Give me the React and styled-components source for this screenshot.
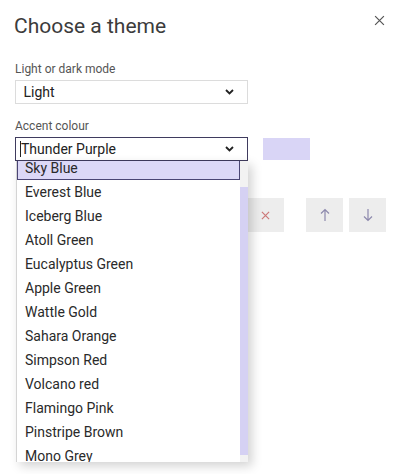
import React, { useLayoutEffect, useRef } from 'react';
import styled, { createGlobalStyle } from 'styled-components';

const GlobalStyle = createGlobalStyle`
  html, body {
    margin: 0;
    background: #fff;
    font-family: Roboto, "Liberation Sans", sans-serif;
  }
`;

const Dialog = styled.div`
  position: relative;
  width: 401px;
  height: 474px;
  box-sizing: border-box;
  padding: 11px 15px 0 15px;
  overflow: hidden;
`;

const Header = styled.div`
  display: flex;
  justify-content: space-between;
  align-items: flex-start;
`;

const Title = styled.h2`
  margin: 0 0 0 -1px;
  font-size: 21px;
  line-height: 30px;
  font-weight: 400;
  color: #3c3c3c;
`;

const CloseButton = styled.button`
  border: 0;
  background: none;
  padding: 0;
  margin: 4px 1px 0 0;
  width: 11px;
  height: 11px;
  display: flex;
  color: #555;
`;

const Field = styled.div`
  margin-top: ${p => p.$top}px;
`;

const Label = styled.div`
  font-size: 12px;
  line-height: 16px;
  color: #555;
  margin-bottom: 3px;
`;

const FieldRow = styled.div`
  display: flex;
  align-items: center;
  gap: 15px;
`;

const SelectWrap = styled.div`
  position: relative;
  width: 233px;
`;

const SelectBox = styled.div`
  height: 24px;
  box-sizing: border-box;
  border: 1px solid ${p => (p.$open ? '#3f3b5e' : '#dcdcdc')};
  display: flex;
  align-items: center;
  padding: 0 13px 0 4px;
  font-size: 14px;
  color: #222;
`;

const SelectText = styled.span`
  flex: 1;
  display: flex;
  align-items: center;
`;

const Caret = styled.span`
  width: 1px;
  height: 16px;
  background: #222;
`;

const Swatch = styled.div`
  width: 47px;
  height: 22px;
  background: #d9d5f6;
`;

const Dropdown = styled.div`
  position: absolute;
  top: 100%;
  left: 1px;
  width: 232px;
  height: 301px;
  display: flex;
  background: #fff;
  border-left: 1px solid #d4d4d4;
  box-sizing: border-box;
  box-shadow: 4px 4px 10px rgba(0, 0, 0, 0.18);
  z-index: 2;
`;

const Options = styled.ul`
  flex: 1;
  margin: 0;
  padding: 0;
  list-style: none;
  overflow: hidden;
`;

const Option = styled.li`
  height: 24px;
  line-height: 22px;
  box-sizing: border-box;
  padding: 0 7px;
  font-size: 14px;
  color: #2a2a2a;
  white-space: nowrap;
  border: 1px solid ${p => (p.$active ? '#4a4574' : 'transparent')};
  background: ${p => (p.$active ? '#dcd8f7' : 'transparent')};
`;

const ScrollTrack = styled.div`
  width: 8px;
  background: #f2f2f2;
  display: flex;
  flex-direction: column;
`;

const ScrollThumb = styled.div`
  margin-top: 26px;
  height: 268px;
  background: #d5d1f3;
`;

const ButtonRow = styled.div`
  margin-top: 37px;
  display: flex;
  justify-content: flex-end;
  align-items: center;
`;

const IconButton = styled.button`
  width: 37px;
  height: 34px;
  border: 0;
  padding: 0;
  background: #ededed;
  display: flex;
  align-items: center;
  justify-content: center;
  color: ${p => p.$color};
  margin-left: ${p => p.$gap}px;
`;

const Chevron = () => (
  <svg width="9" height="6" viewBox="0 0 9 6">
    <path d="M1 1l3.5 3.5L8 1" fill="none" stroke="#222" strokeWidth="1.8" />
  </svg>
);

const Cross = ({ size, width }) => (
  <svg width={size} height={size} viewBox="0 0 10 10">
    <path d="M1 1l8 8M9 1l-8 8" fill="none" stroke="currentColor" strokeWidth={width} />
  </svg>
);

const Arrow = ({ down }) => (
  <svg width="10" height="14" viewBox="0 0 10 14" style={down ? { transform: 'rotate(180deg)' } : undefined}>
    <path d="M5 13V1.5M1 5.5l4-4 4 4" fill="none" stroke="currentColor" strokeWidth="1.2" />
  </svg>
);

const colours = [
  'Thunder Purple',
  'Sky Blue',
  'Everest Blue',
  'Iceberg Blue',
  'Atoll Green',
  'Eucalyptus Green',
  'Apple Green',
  'Wattle Gold',
  'Sahara Orange',
  'Simpson Red',
  'Volcano red',
  'Flamingo Pink',
  'Pinstripe Brown',
  'Mono Grey',
];

export default function App() {
  const listRef = useRef(null);

  useLayoutEffect(() => {
    if (listRef.current) listRef.current.scrollTop = 29;
  }, []);

  return (
    <>
      <GlobalStyle />
      <Dialog>
        <Header>
          <Title>Choose a theme</Title>
          <CloseButton aria-label="Close">
            <Cross size={11} width={1.1} />
          </CloseButton>
        </Header>

        <Field $top={20}>
          <Label>Light or dark mode</Label>
          <SelectWrap>
            <SelectBox>
              <SelectText>&nbsp;Light</SelectText>
              <Chevron />
            </SelectBox>
          </SelectWrap>
        </Field>

        <Field $top={14}>
          <Label>Accent colour</Label>
          <FieldRow>
            <SelectWrap>
              <SelectBox $open>
                <SelectText>
                  <Caret />
                  Thunder Purple
                </SelectText>
                <Chevron />
              </SelectBox>
              <Dropdown>
                <Options ref={listRef}>
                  {colours.map(c => (
                    <Option key={c} $active={c === 'Sky Blue'}>{c}</Option>
                  ))}
                </Options>
                <ScrollTrack>
                  <ScrollThumb />
                </ScrollTrack>
              </Dropdown>
            </SelectWrap>
            <Swatch />
          </FieldRow>
        </Field>

        <ButtonRow>
          <IconButton $color="#c77" $gap={0} aria-label="Remove">
            <Cross size={9} width={1.3} />
          </IconButton>
          <IconButton $color="#8d89ad" $gap={22} aria-label="Move up">
            <Arrow />
          </IconButton>
          <IconButton $color="#8d89ad" $gap={6} aria-label="Move down">
            <Arrow down />
          </IconButton>
        </ButtonRow>
      </Dialog>
    </>
  );
}
